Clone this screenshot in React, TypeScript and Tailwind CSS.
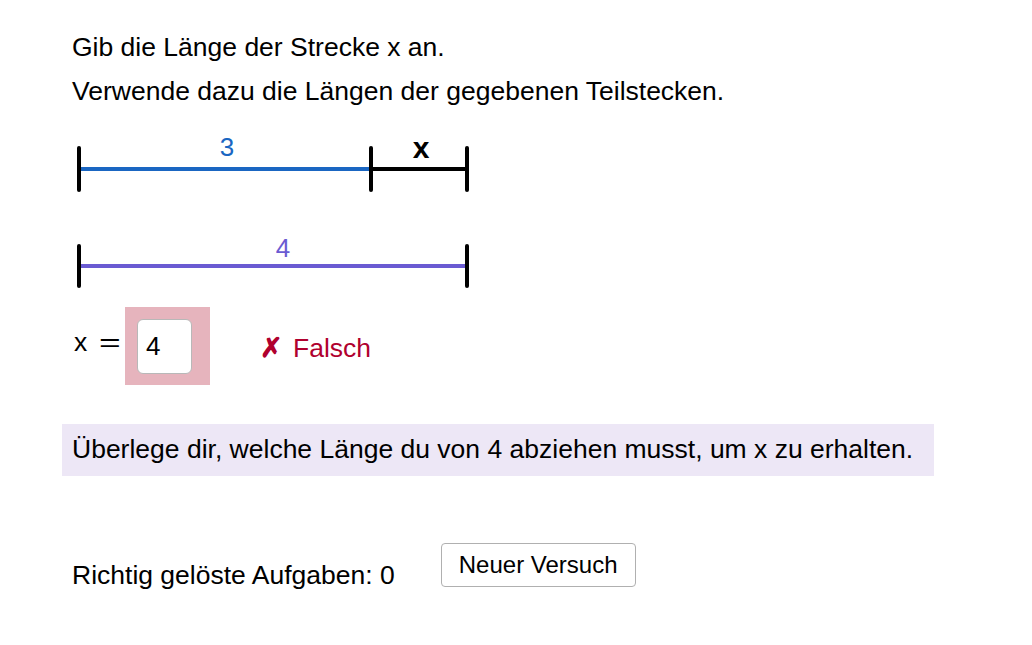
import React from 'react';

const FONT = "font-['Liberation_Sans',sans-serif]";

// two bars: 3 + x on top, 4 below
const Diagram: React.FC = () => (
  <svg width="420" height="170" viewBox="0 0 420 170" className="block">
    <line x1="17" y1="39" x2="309" y2="39" stroke="#1a66c2" strokeWidth="4" />
    <line x1="309" y1="39" x2="405" y2="39" stroke="#000" strokeWidth="4" />
    <line x1="17" y1="18" x2="17" y2="60" stroke="#000" strokeWidth="4" strokeLinecap="round" />
    <line x1="309" y1="18" x2="309" y2="60" stroke="#000" strokeWidth="4" strokeLinecap="round" />
    <line x1="405" y1="18" x2="405" y2="60" stroke="#000" strokeWidth="4" strokeLinecap="round" />
    <text x="165" y="26" textAnchor="middle" fill="#1a66c2" fontSize="26" fontFamily="Liberation Sans, sans-serif">3</text>
    <text x="359" y="28" textAnchor="middle" fill="#000" fontSize="30" fontWeight="bold" fontFamily="Liberation Sans, sans-serif">x</text>

    <line x1="17" y1="136" x2="405" y2="136" stroke="#6a5bd2" strokeWidth="4" />
    <line x1="17" y1="116" x2="17" y2="156" stroke="#000" strokeWidth="4" strokeLinecap="round" />
    <line x1="405" y1="116" x2="405" y2="156" stroke="#000" strokeWidth="4" strokeLinecap="round" />
    <text x="221" y="127" textAnchor="middle" fill="#6a5bd2" fontSize="26" fontFamily="Liberation Sans, sans-serif">4</text>
  </svg>
);

const App: React.FC = () => {
  return (
    <div className={`w-[1032px] h-[645px] bg-white text-black ${FONT} px-[62px] pt-[25px] text-[26.5px]`}>
      <p className="pl-[10px] leading-[44px]">Gib die Länge der Strecke x an.</p>
      <p className="pl-[10px] leading-[44px]">Verwende dazu die Längen der gegebenen Teilstecken.</p>

      <div className="mt-[17px]">
        <Diagram />
      </div>

      <div className="mt-[7px] flex items-center h-[78px]">
        <span className="w-[63px] pl-[12px] mb-[6px] flex items-center gap-[12px] whitespace-nowrap">
          <span>x</span>
          <span className="inline-block scale-x-[1.4] origin-left">=</span>
        </span>
        <div className="w-[85px] h-[78px] bg-[#e6b4bd] flex items-center pl-[12px]">
          <div className="w-[55px] h-[55px] bg-white rounded-[6px] border border-[#b8b8b8] flex items-center pl-[8px] text-[26px]">4</div>
        </div>
        <div className="ml-[50px] mt-[6px] flex items-center gap-[10px] text-[#b0002e]">
          <span className="font-bold">✗</span>
          <span>Falsch</span>
        </div>
      </div>

      <div className="mt-[39px] w-[872px] h-[52px] bg-[#ede7f6] flex items-center pl-[10px]">
        Überlege dir, welche Länge du von 4 abziehen musst, um x zu erhalten.
      </div>

      <div className="mt-[67px] flex items-start pl-[10px]">
        <span className="mt-[13px]">Richtig gelöste Aufgaben: 0</span>
        <button className="ml-[46px] w-[195px] h-[44px] bg-white border border-[#b0b0b0] rounded-[4px] text-[24px]">
          Neuer Versuch
        </button>
      </div>
    </div>
  );
};

export default App;
